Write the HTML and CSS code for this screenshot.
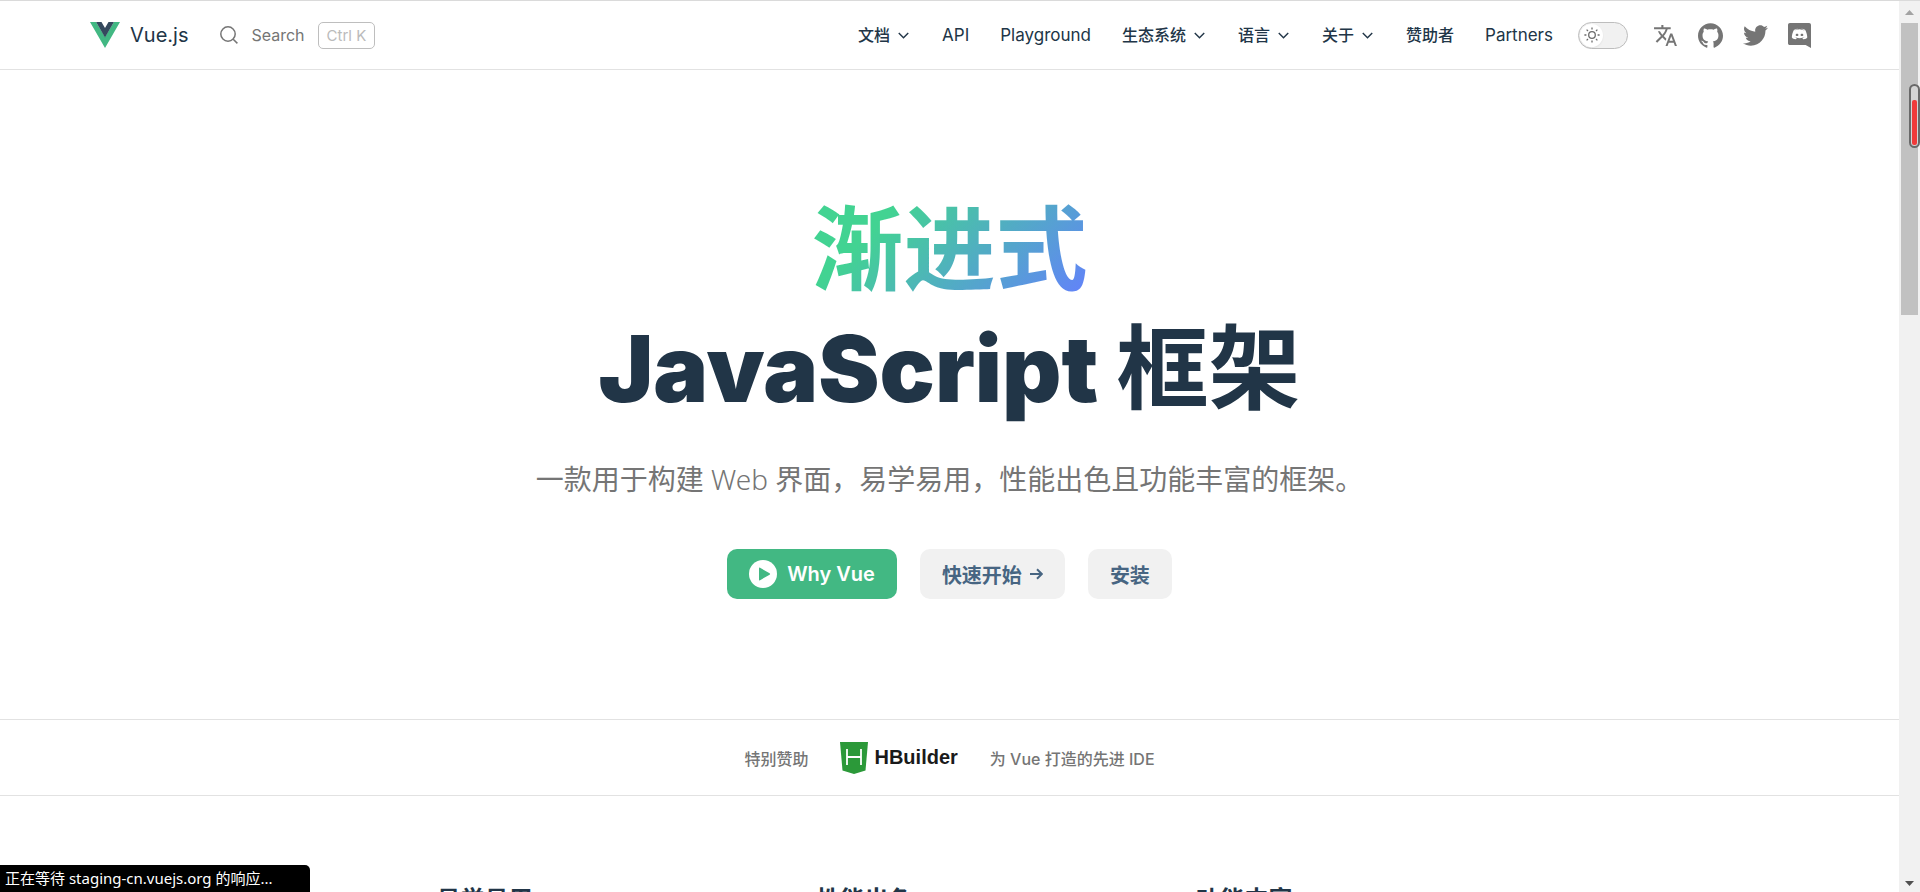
FILE: index.html
```html
<!DOCTYPE html>
<html lang="zh-CN">
<head>
<meta charset="utf-8">
<title>Vue.js - 渐进式 JavaScript 框架</title>
<link rel="stylesheet" href="styles.css">
</head>
<body>
<div class="window">
  <div class="page">
    <header class="nav">
      <a class="brand" href="#">
        <svg class="brand-mark" viewBox="0 0 128 110" aria-hidden="true"><path fill="#42b883" d="M0 0h26l38 64 38-64h26L64 110z"/><path fill="#35495e" d="M26 0h23l15 25L79 0h23L64 66z"/></svg>
        <span>Vue.js</span>
      </a>
      <button class="search" type="button">
        <svg class="search-icon" viewBox="0 0 18 18" aria-hidden="true"><circle cx="8" cy="8" r="7.2"/><path d="M13.2 13.2l4.2 4.2"/></svg>
        <span>Search</span>
        <kbd>Ctrl K</kbd>
      </button>
      <nav class="menu">
        <button type="button">文档<svg class="chevron" viewBox="0 0 10 6" aria-hidden="true"><path d="M.7.7L5 5 9.300.7"/></svg></button>
        <a class="latin" href="#">API</a>
        <a class="latin" href="#">Playground</a>
        <button type="button">生态系统<svg class="chevron" viewBox="0 0 10 6" aria-hidden="true"><path d="M.7.7L5 5 9.300.7"/></svg></button>
        <button type="button">语言<svg class="chevron" viewBox="0 0 10 6" aria-hidden="true"><path d="M.7.7L5 5 9.300.7"/></svg></button>
        <button type="button">关于<svg class="chevron" viewBox="0 0 10 6" aria-hidden="true"><path d="M.7.7L5 5 9.300.7"/></svg></button>
        <a href="#">赞助者</a>
        <a class="latin" href="#">Partners</a>
      </nav>
      <button class="switch" type="button" role="switch" aria-checked="false" aria-label="切换深色模式">
        <span class="knob">
          <svg viewBox="0 0 16 16" aria-hidden="true"><circle cx="8" cy="8" r="3.300"/><path d="M8 .4v2M8 13.600v2M.4 8h2M13.600 8h2M2.600 2.600L4 4M12 12l1.400 1.400M2.600 13.400L4 12M12 4l1.400-1.400"/></svg>
        </span>
      </button>
      <div class="social">
        <button type="button" aria-label="语言"><svg viewBox="0 0 24 24"><path d="M12.870 15.070l-2.540-2.510.03-.03c1.740-1.940 2.980-4.170 3.710-6.530H17V4h-7V2H8v2H1v1.990h11.170C11.500 7.920 10.440 9.750 9 11.350 8.070 10.320 7.300 9.190 6.690 8h-2c.73 1.630 1.730 3.170 2.980 4.560l-5.090 5.020L4 19l5-5 3.110 3.110.76-2.040zM18.500 10h-2L12 22h2l1.120-3h4.750L21 22h2l-4.500-12zm-2.620 7l1.620-4.330L19.120 17h-3.240z"/></svg></button>
        <a href="#" aria-label="GitHub"><svg viewBox="0 0 24 24"><path d="M12 .297c-6.630 0-12 5.373-12 12 0 5.303 3.438 9.800 8.205 11.385.6.113.82-.258.82-.577 0-.285-.01-1.040-.015-2.040-3.338.724-4.042-1.610-4.042-1.610C4.422 18.070 3.633 17.700 3.633 17.700c-1.087-.744.084-.729.084-.729 1.205.084 1.838 1.236 1.838 1.236 1.070 1.835 2.809 1.305 3.495.998.108-.776.417-1.305.76-1.605-2.665-.3-5.466-1.332-5.466-5.930 0-1.310.465-2.380 1.235-3.220-.135-.303-.54-1.523.105-3.176 0 0 1.005-.322 3.300 1.230.96-.267 1.980-.399 3-.405 1.020.006 2.040.138 3 .405 2.280-1.552 3.285-1.230 3.285-1.230.645 1.653.24 2.873.12 3.176.765.84 1.230 1.910 1.230 3.220 0 4.610-2.805 5.625-5.475 5.920.42.36.81 1.096.81 2.220 0 1.606-.015 2.896-.015 3.286 0 .315.21.69.825.57C20.565 22.092 24 17.592 24 12.297c0-6.627-5.373-12-12-12"/></svg></a>
        <a href="#" aria-label="Twitter"><svg viewBox="0 0 24 24"><path d="M23.954 4.569c-.885.389-1.830.654-2.825.775 1.014-.611 1.794-1.574 2.163-2.723-.951.555-2.005.959-3.127 1.184-.896-.959-2.173-1.559-3.591-1.559-2.717 0-4.920 2.203-4.920 4.917 0 .39.045.765.127 1.124C7.691 8.094 4.066 6.130 1.640 3.161c-.427.722-.666 1.561-.666 2.475 0 1.710.87 3.213 2.188 4.096-.807-.026-1.566-.248-2.228-.616v.061c0 2.385 1.693 4.374 3.946 4.827-.413.111-.849.171-1.296.171-.314 0-.615-.03-.916-.086.631 1.953 2.445 3.377 4.604 3.417-1.680 1.319-3.809 2.105-6.102 2.105-.39 0-.779-.023-1.170-.067 2.189 1.394 4.768 2.209 7.557 2.209 9.054 0 13.999-7.496 13.999-13.986 0-.209 0-.42-.015-.63.961-.689 1.800-1.560 2.460-2.548z"/></svg></a>
        <a href="#" aria-label="Discord"><svg class="discord" viewBox="3 2 18 21" preserveAspectRatio="none"><path d="M10.076 11c.6 0 1.086.45 1.075 1 0 .55-.474 1-1.075 1C9.486 13 9 12.550 9 12s.475-1 1.076-1zm3.848 0c.601 0 1.076.45 1.076 1s-.475 1-1.076 1c-.59 0-1.075-.45-1.075-1s.474-1 1.075-1zM19.500 2C20.400 2 21 2.700 21 3.600V23l-4.200-2.478H4.500C3.600 20.522 3 19.900 3 19V3.600C3 2.700 3.600 2 4.500 2zm-4.579 13.713c2.273-.073 3.148-1.596 3.148-1.596 0-3.381-1.482-6.122-1.482-6.122-1.480-1.133-2.890-1.102-2.890-1.102l-.144.168c1.749.546 2.561 1.334 2.561 1.334a8.263 8.263 0 0 0-3.096-1.008 8.527 8.527 0 0 0-2.077.02c-.062 0-.114.011-.175.021-.36.032-1.235.168-2.335.662-.38.178-.607.305-.607.305s.854-.83 2.705-1.376l-.103-.126s-1.409-.031-2.890 1.103c0 0-1.481 2.740-1.481 6.121 0 0 .864 1.522 3.137 1.596 0 0 .38-.472.69-.871-1.307-.4-1.800-1.240-1.800-1.240s.102.074.287.179c.01.01.02.021.041.031.031.022.062.032.093.053.257.147.514.262.75.357.422.168.926.336 1.513.452a7.060 7.060 0 0 0 2.664.01 6.666 6.666 0 0 0 1.491-.451c.36-.137.761-.337 1.183-.62 0 0-.514.861-1.862 1.250.309.399.68.85.68.85z"/></svg></a>
      </div>
    </header>

    <main>
      <section class="hero">
        <h1><span class="han accent">渐进式</span><br>JavaScript <span class="han">框架</span></h1>
        <p class="tagline">一款用于构建 <span class="light">Web</span> 界面，易学易用，性能出色且功能丰富的框架。</p>
        <div class="actions">
          <button class="action primary" type="button">
            <svg class="play" viewBox="0 0 28 28" aria-hidden="true"><circle cx="14" cy="14" r="14" fill="#fff"/><path fill="#42b883" d="M10 8.500q0-1.300 1.100-.7l9.500 5.400q1 .8 0 1.500l-9.500 5.500q-1.100.6-1.100-.7z"/></svg>
            <span>Why Vue</span>
          </button>
          <a class="action" href="#">快速开始<svg class="arrow" viewBox="0 0 13 12" aria-hidden="true"><path d="M0 6h11.500M7 1.200L11.800 6 7 10.800"/></svg></a>
          <a class="action" href="#">安装</a>
        </div>
      </section>

      <section class="sponsor">
        <span>特别赞助</span>
        <a class="sponsor-logo" href="#">
          <svg viewBox="0 0 28 32" aria-hidden="true"><path fill="#2b9939" d="M0 0h28l-2.500 28.500L14 32 2.500 28.500z"/><path fill="none" stroke="#fff" stroke-width="1.800" d="M7 7v16M21 7v16M7 15h14"/></svg>
          <span>HBuilder</span>
        </a>
        <span>为 Vue 打造的先进 IDE</span>
      </section>

      <section class="features">
        <h2>易学易用</h2>
        <h2>性能出色</h2>
        <h2>功能丰富</h2>
      </section>
    </main>
  </div>

  <div class="scrollbar" aria-hidden="true">
    <svg class="step up" viewBox="0 0 9 5"><path d="M0 5L4.500 0 9 5z"/></svg>
    <div class="track"><div class="thumb"></div></div>
    <svg class="step down" viewBox="0 0 9 5"><path d="M0 0l4.500 5L9 0z"/></svg>
  </div>
</div>
<div class="meter" aria-hidden="true"><div class="meter-level"></div></div>
<div class="status">正在等待 staging-cn.vuejs.org 的响应...</div>
</body>
</html>
```
FILE: styles.css
```css
* { box-sizing: border-box; }
body {
  margin: 0;
  background: #fff;
  color: #213547;
  font-family: Inter, "Noto Sans CJK SC", sans-serif;
  font-size: 16px;
}
button {
  font: inherit;
  color: inherit;
  background: none;
  border: 0;
  padding: 0;
}
a { color: inherit; text-decoration: none; }
svg { display: block; }

.window {
  display: grid;
  grid-template-columns: minmax(0, 1fr) 21px;
  height: 100vh;
  border-top: 1px solid #dadada;
}
.page { overflow: hidden; }

/* navigation */
.nav {
  display: flex;
  align-items: center;
  height: 69px;
  padding: 0 88px 0 90px;
  border-bottom: 1px solid #e2e2e2;
}
.brand {
  display: flex;
  align-items: center;
  gap: 10px;
  font-size: 20px;
  color: #213547;
}
.brand-mark { width: 30px; height: 26px; }
.search {
  display: flex;
  align-items: center;
  gap: 13px;
  margin-left: 32px;
  color: #757575;
}
.search-icon {
  width: 18px;
  height: 18px;
  fill: none;
  stroke: #757575;
  stroke-width: 1.500;
}
.search kbd {
  padding: 0 8px;
  border: 1px solid #bebebe;
  border-radius: 5px;
  color: #bbb;
  font-family: inherit;
  font-size: 15px;
  line-height: 25px;
}
.menu {
  display: flex;
  margin-left: auto;
  line-height: 24px;
}
.menu > * {
  display: flex;
  align-items: center;
  gap: 8px;
  padding: 0 16px 0 15px;
  font-weight: 500;
}
.menu > button { padding-right: 18px; }
.menu > .latin { font-size: 17px; font-weight: 400; }
.chevron {
  width: 11px;
  height: 7px;
  fill: none;
  stroke: #213547;
  stroke-width: 1.300;
}
.switch {
  width: 50px;
  height: 27px;
  margin-left: 9px;
  padding: 1px;
  border: 1px solid #bdbdbd;
  border-radius: 14px;
  background: #f1f1f1;
}
.knob {
  display: grid;
  place-items: center;
  width: 23px;
  height: 23px;
  border-radius: 50%;
  background: #fff;
  box-shadow: 0 1px 2px #0001;
}
.knob svg {
  width: 16px;
  height: 16px;
  fill: none;
  stroke: #6b6b6b;
  stroke-width: 1.300;
}
.social {
  display: flex;
  gap: 20px;
  margin-left: 25px;
}
.social svg {
  width: 25px;
  height: 25px;
  fill: #757575;
}
.social .discord { width: 23px; }

/* hero */
.hero { padding: 120px 40px; text-align: center; }
h1 {
  margin: 0;
  font-size: 92px;
  line-height: 119px;
  font-weight: 900;
}
.han { font-weight: 700; }
.accent {
  background: linear-gradient(135deg, #42d392 25%, #647eff);
  -webkit-background-clip: text;
  background-clip: text;
  color: transparent;
}
.tagline {
  margin: 31px 0 49px;
  color: #757575;
  font-family: "Noto Sans", "Noto Sans CJK SC", sans-serif;
  font-size: 28px;
  line-height: 41px;
}
.light { font-weight: 300; }
.actions { display: flex; justify-content: center; gap: 23px; }
.action {
  display: flex;
  align-items: center;
  height: 50px;
  padding: 0 22px;
  border-radius: 10px;
  background: #f1f1f1;
  color: #476582;
  font-size: 20px;
  font-weight: 600;
}
.primary {
  gap: 10px;
  background: #42b883;
  color: #fff;
}
.play { width: 28px; height: 28px; }
.arrow {
  width: 13px;
  height: 12px;
  margin-left: 8px;
  fill: none;
  stroke: #476582;
  stroke-width: 2;
}

/* sponsor */
.sponsor {
  display: flex;
  align-items: center;
  justify-content: center;
  gap: 32px;
  height: 77px;
  border-top: 1px solid #e2e2e2;
  border-bottom: 1px solid #e2e2e2;
  color: #757575;
  font-weight: 500;
}
.sponsor-logo {
  display: flex;
  align-items: center;
  gap: 6px;
  color: #1a1a1a;
  font: bold 20px "Liberation Sans", sans-serif;
}
.sponsor-logo svg { width: 28px; height: 32px; }

/* features */
.features {
  display: grid;
  grid-template-columns: repeat(3, 320px);
  justify-content: center;
  gap: 60px;
  padding-top: 88px;
}
h2 {
  margin: 0;
  padding: 0 27px;
  font-size: 24px;
  line-height: 32px;
  font-weight: 600;
}

/* window chrome */
.scrollbar {
  display: flex;
  flex-direction: column;
  align-items: center;
  gap: 8px;
  padding: 9px 2px 6px;
  background: #f1f1f1;
}
.step { width: 9px; height: 5px; }
.up { fill: #a3a3a3; }
.down { fill: #505050; }
.track { flex: 1; width: 17px; }
.thumb { height: 34.300%; background: #c1c1c1; }
.meter {
  position: absolute;
  top: 84px;
  right: 0;
  width: 11px;
  height: 64px;
  padding: 14px 1px 1px;
  border: 2px solid #696969;
  border-radius: 6px;
  background: #d5d5d5;
}
.meter-level { height: 100%; border-radius: 2px; background: #f03a3a; }
.status {
  position: fixed;
  left: 0;
  bottom: 0;
  width: 310px;
  padding: 0 5px;
  border-radius: 0 5px 0 0;
  background: #000;
  color: #fff;
  font-family: "Noto Sans", "Noto Sans CJK SC", sans-serif;
  font-size: 15px;
  line-height: 27px;
}
```
